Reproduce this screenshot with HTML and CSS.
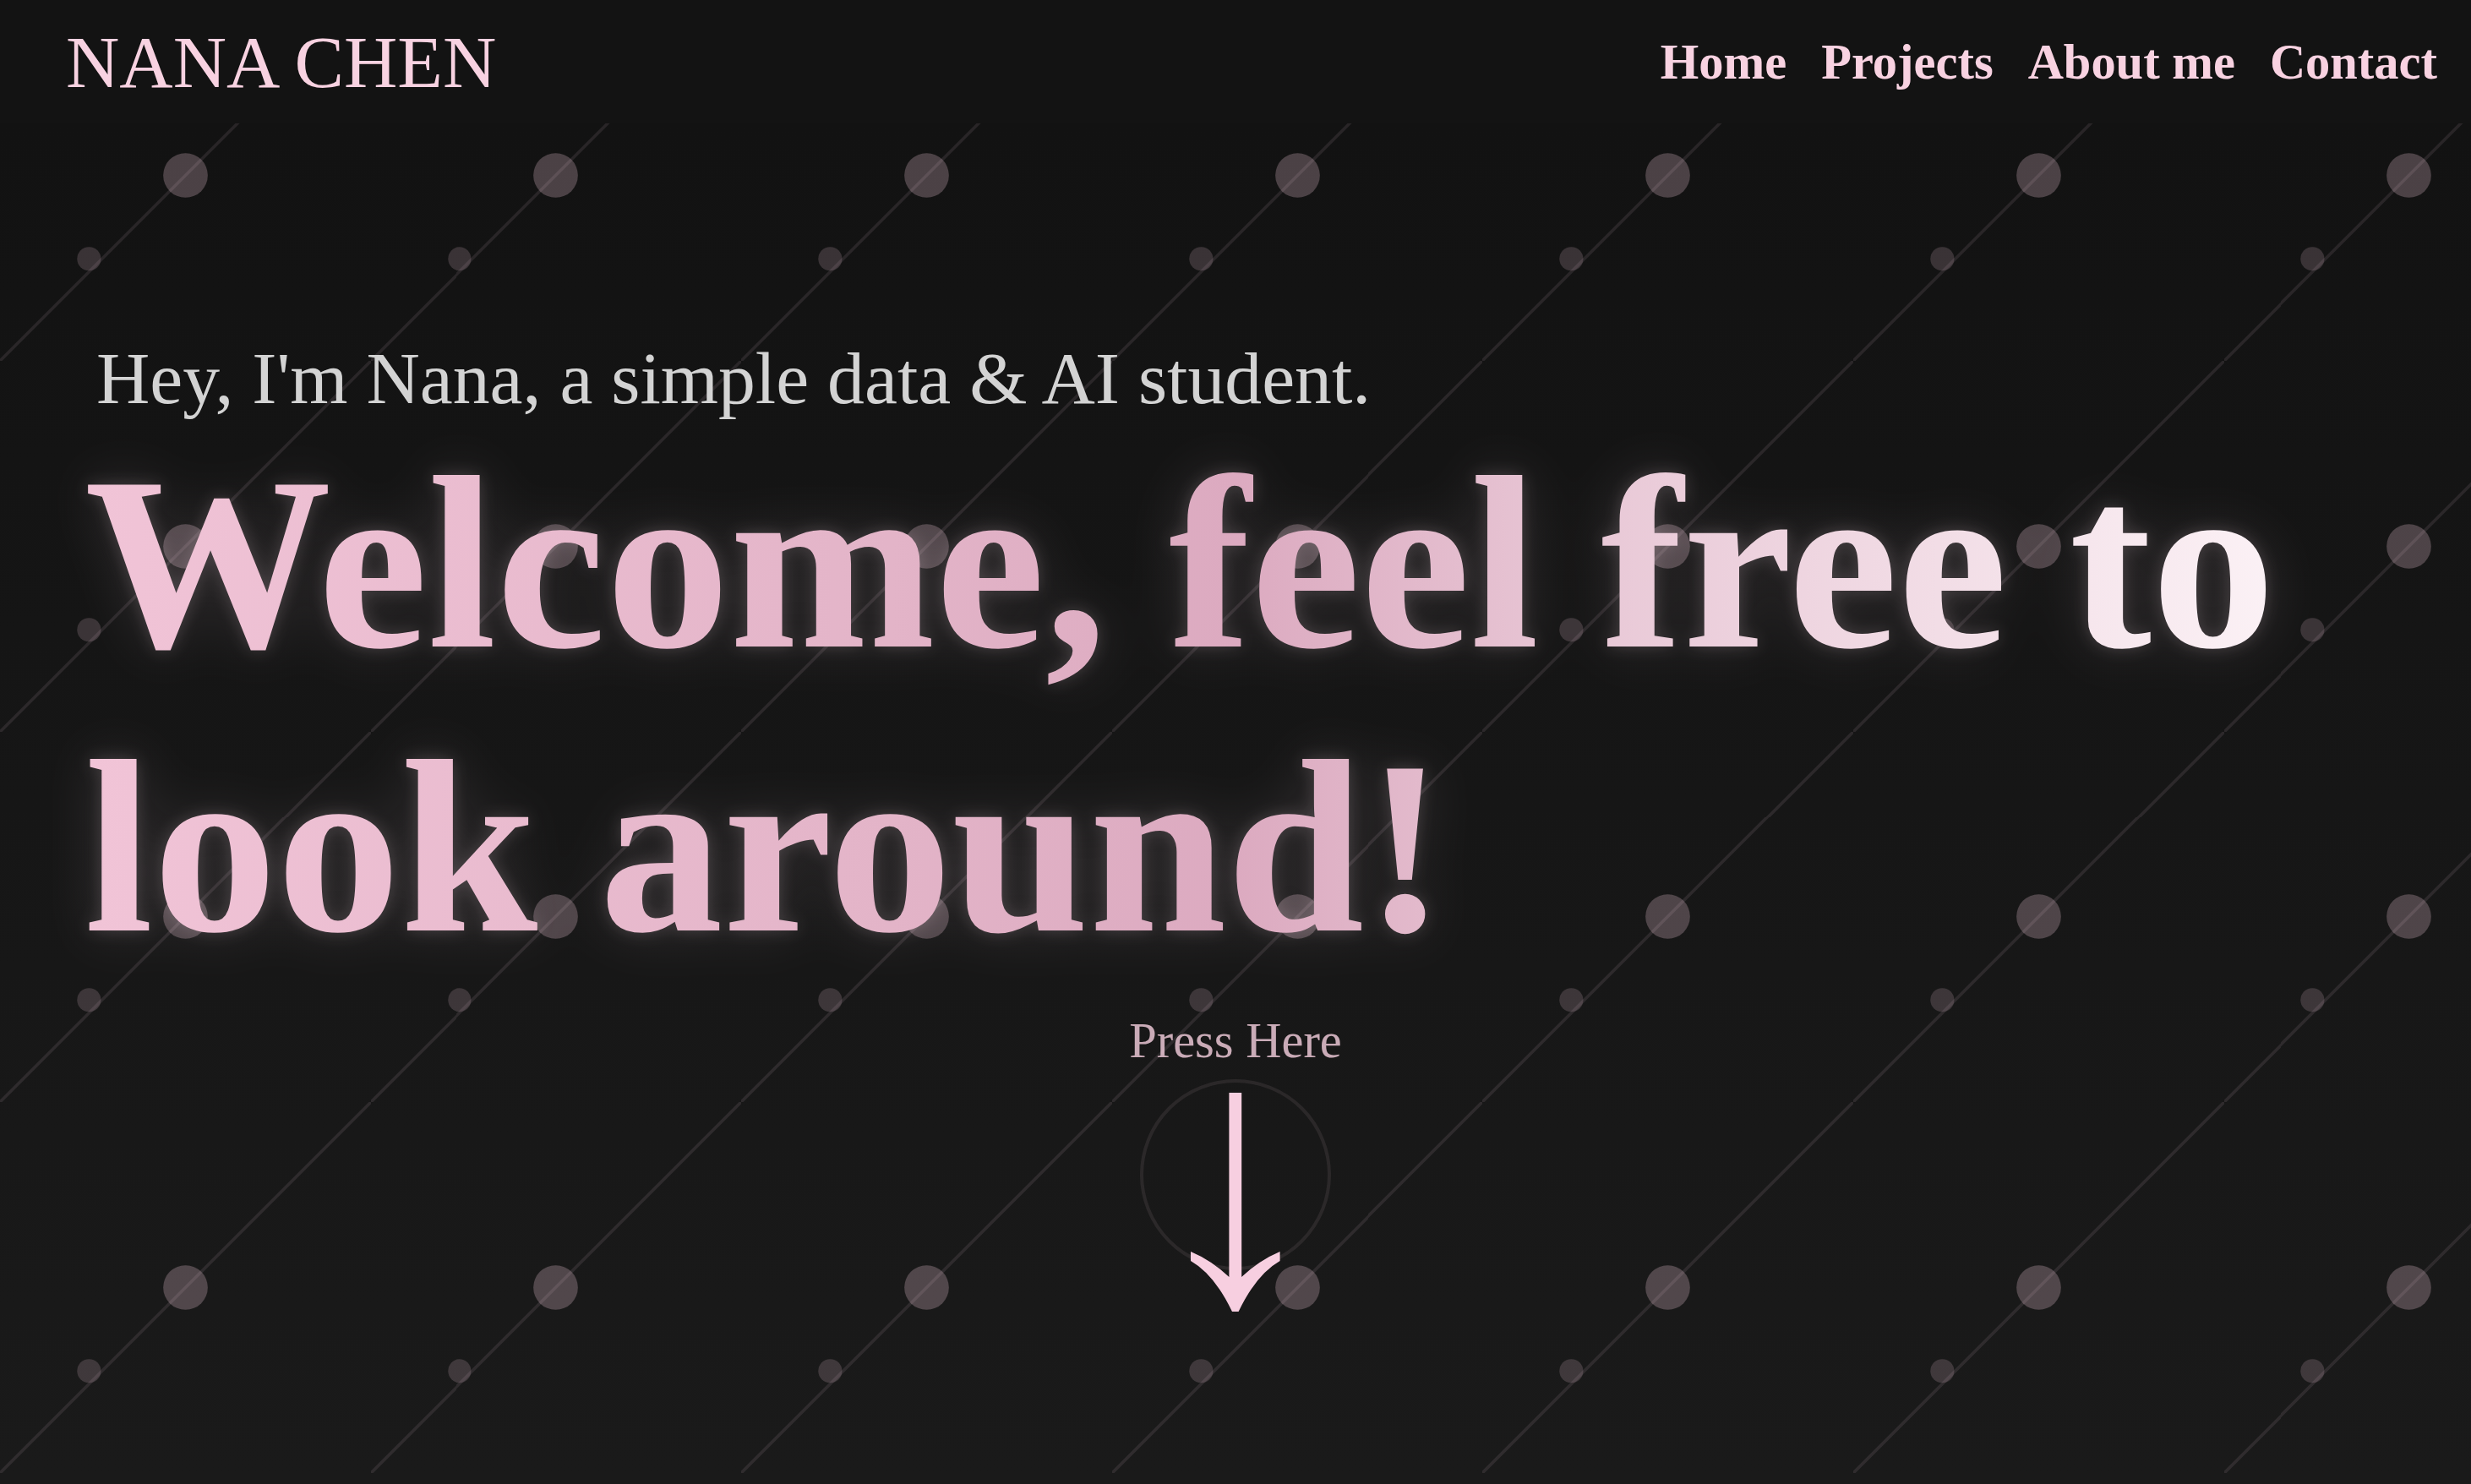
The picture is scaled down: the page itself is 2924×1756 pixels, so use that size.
FILE: index.html
```html
<!DOCTYPE html>
<html lang="en">
<head>
<meta charset="utf-8">
<title>Nana Chen</title>
<link rel="stylesheet" href="styles.css">
</head>
<body>
<header class="site-header">
  <div class="logo">NANA CHEN</div>
  <nav class="nav">
    <a class="nav-link" href="#home">Home</a>
    <a class="nav-link" href="#projects">Projects</a>
    <a class="nav-link" href="#about">About me</a>
    <a class="nav-link" href="#contact">Contact</a>
  </nav>
</header>
<main class="hero" id="home">
  <p class="intro">Hey, I'm Nana, a simple data &amp; AI student.</p>
  <h1 class="headline">Welcome, feel free to look around!</h1>
  <a class="press" href="#projects">Press Here</a>
  <a class="scroll-cue" href="#projects" aria-label="Scroll down">
    <span class="ring"></span>
    <svg class="arrow" width="106" height="260" viewBox="0 0 106 260">
      <path d="M45.4 0 H60.2 V218 Q81.6 198 105.6 188 V199 Q77.6 215 56.6 259 H49 Q28 215 0 199 V188 Q24 198 45.4 218 Z" fill="#f7cfe0"/>
    </svg>
  </a>
</main>
</body>
</html>
```
FILE: styles.css
```css
html, body {
  margin: 0;
  padding: 0;
}

body {
  background: #1a1a1a;
  font-family: "Liberation Serif", "Times New Roman", serif;
  overflow: hidden;
}

a {
  text-decoration: none;
}

.site-header {
  height: 146px;
  display: flex;
  align-items: center;
  justify-content: space-between;
  padding: 0 40px 0 78px;
  background: #131313;
}

.logo {
  font-size: 3vw;
  color: #f8d2e1;
}

.nav {
  display: flex;
  gap: 41px;
}

.nav-link {
  font-size: 2vw;
  font-weight: bold;
  color: #f8d2e1;
}

.hero {
  height: calc(100vh - 159px);
  box-sizing: border-box;
  padding: 251px 100px 0 100px;
  background-image:
    url("data:image/svg+xml,%3Csvg xmlns='http://www.w3.org/2000/svg' viewBox='0 0 100 100' preserveAspectRatio='none'%3E%3Ccircle cx='50' cy='50' r='6' fill='rgba(248,209,224,0.25)'/%3E%3Ccircle cx='24' cy='72.5' r='3.2' fill='rgba(248,209,224,0.17)'/%3E%3Cline x1='100' y1='0' x2='0' y2='100' stroke='rgba(248,209,224,0.1)' stroke-width='0.8' stroke-linecap='round'/%3E%3C/svg%3E"),
    linear-gradient(180deg, #121212 0%, #1a1a1a 100%);
  background-size: 15vw 15vw, 100% 100%;
  background-position: 0 -157.6px, 0 0;
  background-repeat: repeat, no-repeat;
}

.intro {
  margin: 0;
  padding-left: 14px;
  font-size: 3vw;
  color: #d3d3d3;
}

.headline {
  margin: 0;
  font-size: 10vw;
  font-weight: bold;
  line-height: normal;
  background: linear-gradient(90deg, #f1c4d7 0%, #e3b4c8 35%, #dcaac0 50%, #e9c9d7 66%, #fbf1f5 95%);
  -webkit-background-clip: text;
  background-clip: text;
  color: transparent;
  -webkit-text-fill-color: transparent;
  filter: drop-shadow(0 0 10px rgba(255, 225, 238, 0.18)) drop-shadow(0 0 35px rgba(255, 225, 238, 0.14));
}

.press {
  display: block;
  margin-top: 28px;
  text-align: center;
  font-size: 2vw;
  color: #f7d1e0;
  opacity: 0.8;
}

.scroll-cue {
  position: relative;
  display: block;
  width: 226px;
  margin: 0 auto;
  padding-top: 28px;
}

.ring {
  position: absolute;
  top: 12px;
  left: 0;
  width: 226px;
  height: 226px;
  box-sizing: border-box;
  border: 4px solid rgba(248, 209, 224, 0.09);
  border-radius: 50%;
}

.arrow {
  position: relative;
  display: block;
  margin: 0 auto;
}
```
